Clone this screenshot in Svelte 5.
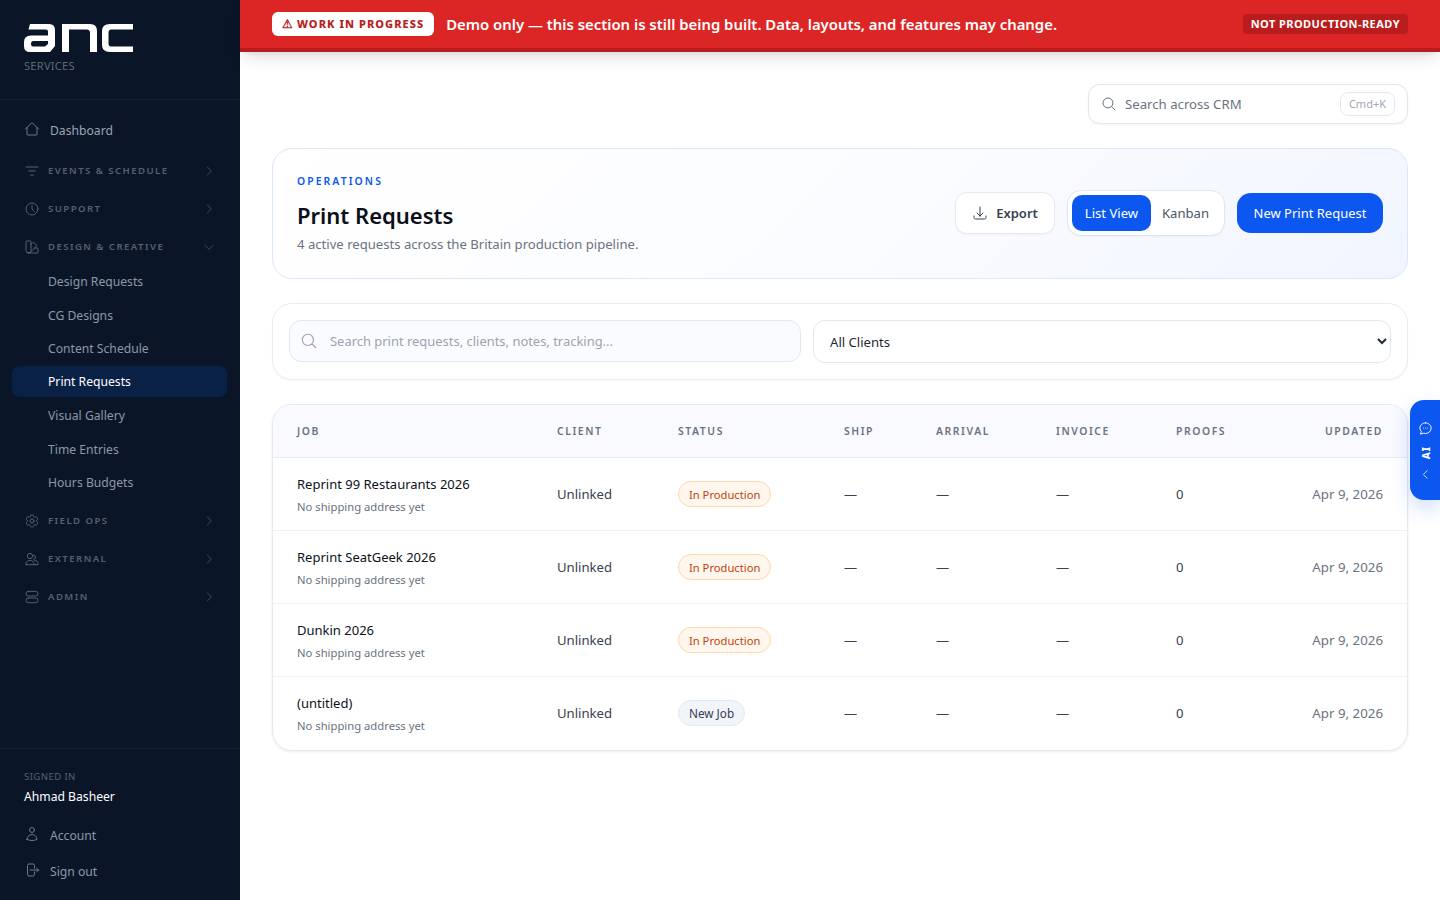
<script>
  const icons = {
    home: 'M2.25 12l8.954-8.955c.44-.439 1.152-.439 1.591 0L21.75 12M4.5 9.75v10.125c0 .621.504 1.125 1.125 1.125h12.75c.621 0 1.125-.504 1.125-1.125V9.75',
    filter: 'M3 6h18M7 12h10M10 18h4',
    clock: 'M12 7v5l3.5 3.5M21 12a9 9 0 11-18 0 9 9 0 0118 0z',
    swatch: 'M4.098 19.902a3.75 3.75 0 005.304 0l6.401-6.402M6.75 21A3.75 3.75 0 013 17.25V4.125C3 3.504 3.504 3 4.125 3h5.25c.621 0 1.125.504 1.125 1.125v4.072M6.75 21a3.75 3.75 0 003.75-3.75V8.197M6.75 21h13.125c.621 0 1.125-.504 1.125-1.125v-5.25c0-.621-.504-1.125-1.125-1.125h-4.072M10.5 8.197l2.88-2.88c.438-.439 1.15-.439 1.59 0l3.712 3.713c.44.44.44 1.152 0 1.59l-2.879 2.88',
    cog: 'M9.594 3.94c.09-.542.56-.94 1.11-.94h2.593c.55 0 1.02.398 1.11.94l.213 1.281c.063.374.313.686.645.87.074.04.147.083.22.127.324.196.72.257 1.075.124l1.217-.456a1.125 1.125 0 011.37.49l1.296 2.247a1.125 1.125 0 01-.26 1.431l-1.003.827c-.293.24-.438.613-.431.992a6.759 6.759 0 010 .255c-.007.378.138.75.43.99l1.005.828c.424.35.534.954.26 1.43l-1.298 2.247a1.125 1.125 0 01-1.369.491l-1.217-.456c-.355-.133-.75-.072-1.076.124a6.57 6.57 0 01-.22.128c-.331.183-.581.495-.644.869l-.213 1.28c-.09.543-.56.941-1.11.941h-2.594c-.55 0-1.02-.398-1.11-.94l-.213-1.281c-.062-.374-.312-.686-.644-.87a6.52 6.52 0 01-.22-.127c-.325-.196-.72-.257-1.076-.124l-1.217.456a1.125 1.125 0 01-1.369-.49l-1.297-2.247a1.125 1.125 0 01.26-1.431l1.004-.827c.292-.24.437-.613.43-.992a6.932 6.932 0 010-.255c.007-.378-.138-.75-.43-.99l-1.004-.828a1.125 1.125 0 01-.26-1.43l1.297-2.247a1.125 1.125 0 011.37-.491l1.216.456c.356.133.751.072 1.076-.124.072-.044.146-.087.22-.128.332-.183.582-.495.644-.869l.214-1.281zM15 12a3 3 0 11-6 0 3 3 0 016 0z',
    users: 'M13 7.5a4 4 0 11-8 0 4 4 0 018 0zM3 20.5v-1.2C3 16.4 5.6 14 9 14s6 2.400 6 5.300v1.200H3zM14.500 6.500a3 3 0 110 6M15.500 14c3.200.2 5.500 2 5.500 4.500v2h-6',
    admin: 'M6.500 3.500h11a3.500 3.500 0 010 7h-11a3.500 3.500 0 010-7zM6.500 13.500h11a3.500 3.500 0 010 7h-11a3.500 3.500 0 010-7z',
    user: 'M15.75 6a3.75 3.75 0 11-7.5 0 3.75 3.75 0 017.5 0zM4.501 20.118a7.5 7.5 0 0114.998 0A17.933 17.933 0 0112 21.75c-2.676 0-5.216-.584-7.499-1.632z',
    signout: 'M15.75 9V5.25A2.25 2.25 0 0013.5 3h-6a2.25 2.25 0 00-2.25 2.25v13.5A2.25 2.25 0 007.500 21h6a2.250 2.250 0 002.250-2.250V15m3 0l3-3m0 0l-3-3m3 3H9',
    download: 'M3 16.5v2.25A2.25 2.25 0 005.25 21h13.5A2.25 2.25 0 0021 18.75V16.5M16.5 12L12 16.5m0 0L7.5 12m4.5 4.5V3',
    search: 'M21 21l-5.197-5.197m0 0A7.5 7.5 0 105.196 5.196a7.5 7.5 0 0010.607 10.607z',
    chat: 'M12 3c5 0 9 3.800 9 8.500S17 20 12 20c-1.100 0-2.100-.2-3-.5L4 21l1.300-4.200C3.900 15.300 3 13.500 3 11.500 3 6.800 7 3 12 3zM8.500 11.500h.01M12 11.500h.01M15.500 11.500h.01',
    right: 'M9 5l7 7-7 7',
    down: 'M5 9l7 7 7-7',
    left: 'M15 5l-7 7 7 7'
  };
  const subItems = ['Design Requests', 'CG Designs', 'Content Schedule', 'Print Requests', 'Visual Gallery', 'Time Entries', 'Hours Budgets'];
  const rows = [
    { job: 'Reprint 99 Restaurants 2026', status: 'In Production', kind: 'prod' },
    { job: 'Reprint SeatGeek 2026', status: 'In Production', kind: 'prod' },
    { job: 'Dunkin 2026', status: 'In Production', kind: 'prod' },
    { job: '(untitled)', status: 'New Job', kind: 'new' }
  ];
</script>

{#snippet icon(name, cls)}
  <svg class={cls} viewBox="0 0 24 24" fill="none" stroke="currentColor" stroke-width="1.5" stroke-linecap="round" stroke-linejoin="round" aria-hidden="true"><path d={icons[name]} /></svg>
{/snippet}

{#snippet group(name, label, open)}
  <div class="group">
    {@render icon(name, 'g-icon')}
    <span class="g-label">{label}</span>
    {@render icon(open ? 'down' : 'right', 'g-chev')}
  </div>
{/snippet}

<div class="app">
  <aside class="sidebar">
    <div class="brand">
      <svg class="logo" viewBox="24 24 110 28" aria-label="ANC" role="img">
        <path fill="#fff" fill-rule="evenodd" d="M30 24H49Q55 24 55 30V46L50 52H30Q24 52 24 46V42Q24 35.500 31 35.500H48V31.500Q48 29.500 46 29.500H28.500ZM33 41Q31 41 31 43.500Q31 46.500 33 46.500H45L48 44V41Z" />
        <path fill="#fff" d="M62 24H90Q97 24 97 31V52H90V33Q90 29.500 87 29.500H69V52H62Z" />
        <path fill="#fff" d="M110 24H133V29.500H111Q108.500 29.500 108.500 33V43Q108.500 46.500 111 46.500H133V52H110Q102 52 102 45V31Q102 24 110 24Z" />
      </svg>
      <div class="brand-sub">SERVICES</div>
    </div>
    <nav class="nav">
      <a class="top-link" href="#dashboard">{@render icon('home', 'l-icon')}<span>Dashboard</span></a>
      {@render group('filter', 'EVENTS & SCHEDULE', false)}
      {@render group('clock', 'SUPPORT', false)}
      {@render group('swatch', 'DESIGN & CREATIVE', true)}
      <div class="subs">
        {#each subItems as item}
          <a class="sub" class:active={item === 'Print Requests'} href="#sub">{item}</a>
        {/each}
      </div>
      {@render group('cog', 'FIELD OPS', false)}
      {@render group('users', 'EXTERNAL', false)}
      {@render group('admin', 'ADMIN', false)}
    </nav>
    <div class="foot">
      <div class="signed">SIGNED IN</div>
      <div class="who">Ahmad Basheer</div>
      <a class="foot-link first" href="#account">{@render icon('user', 'l-icon')}<span>Account</span></a>
      <a class="foot-link" href="#signout">{@render icon('signout', 'l-icon')}<span>Sign out</span></a>
    </div>
  </aside>

  <div class="main">
    <div class="banner">
      <span class="wip"><span class="warn">⚠</span> WORK IN PROGRESS</span>
      <span class="demo">Demo only — this section is still being built. Data, layouts, and features may change.</span>
      <span class="npr">NOT PRODUCTION-READY</span>
    </div>

    <div class="content">
      <div class="topbar">
        <div class="global-search">
          {@render icon('search', 's-icon')}
          <span class="gs-text">Search across CRM</span>
          <span class="kbd">Cmd+K</span>
        </div>
      </div>

      <section class="hero">
        <div class="hero-text">
          <div class="eyebrow">OPERATIONS</div>
          <h1>Print Requests</h1>
          <p>4 active requests across the Britain production pipeline.</p>
        </div>
        <div class="actions">
          <button class="export">{@render icon('download', 'd-icon')}Export</button>
          <div class="toggle">
            <button class="tg on">List View</button>
            <button class="tg">Kanban</button>
          </div>
          <button class="primary">New Print Request</button>
        </div>
      </section>

      <section class="filters">
        <label class="f-search">
          {@render icon('search', 'f-icon')}
          <input placeholder="Search print requests, clients, notes, tracking..." />
        </label>
        <select class="f-select"><option>All Clients</option></select>
      </section>

      <section class="table-card">
        <table>
          <colgroup>
            <col class="c1" /><col class="c2" /><col class="c3" /><col class="c4" /><col class="c5" /><col class="c6" /><col class="c7" /><col />
          </colgroup>
          <thead>
            <tr>
              <th>JOB</th><th>CLIENT</th><th>STATUS</th><th>SHIP</th><th>ARRIVAL</th><th>INVOICE</th><th>PROOFS</th><th class="r">UPDATED</th>
            </tr>
          </thead>
          <tbody>
            {#each rows as row}
              <tr>
                <td class="job-cell">
                  <div class="job">{row.job}</div>
                  <div class="addr">No shipping address yet</div>
                </td>
                <td class="cell">Unlinked</td>
                <td><span class="pill {row.kind}">{row.status}</span></td>
                <td class="cell">—</td>
                <td class="cell">—</td>
                <td class="cell">—</td>
                <td class="cell">0</td>
                <td class="date r">Apr 9, 2026</td>
              </tr>
            {/each}
          </tbody>
        </table>
      </section>
    </div>
  </div>

  <div class="ai">
    {@render icon('chat', 'ai-chat')}
    <span class="ai-label">AI</span>
    {@render icon('left', 'ai-chev')}
  </div>
</div>

<style>
  :global(body) {
    margin: 0;
    background: #fff;
    font-family: "Noto Sans", sans-serif;
    color: #0f172a;
  }
  .app { display: flex; min-height: 900px; height: 900px; overflow: hidden; position: relative; }
  a { text-decoration: none; color: inherit; }

  .sidebar { width: 240px; flex: none; background: #0a1628; display: flex; flex-direction: column; height: 900px; }
  .brand { height: 100px; box-sizing: border-box; padding: 24px 24px 0; border-bottom: 1px solid #152033; }
  .logo { display: block; width: 110px; height: 28px; }
  .brand-sub { margin-top: 7px; font-size: 11px; line-height: 14px; letter-spacing: 0.3px; color: #5d6878; }
  .nav { flex: 1; padding: 13px 13px 0 12px; }
  .top-link { display: flex; align-items: center; gap: 10px; height: 34px; margin-bottom: 5px; padding: 0 12px; color: #9aa5b5; font-size: 12.160px; }
  .l-icon { width: 16px; height: 16px; color: #6e7887; flex: none; margin-top: -2px; }
  .group { display: flex; align-items: center; height: 38px; padding: 0 11px 0 12px; color: #566170; }
  .g-icon { width: 16px; height: 16px; flex: none; margin-right: 8px; }
  .g-label { flex: 1; font-size: 9.600px; line-height: 12px; margin-top: -1px; font-weight: 600; letter-spacing: 1.440px; }
  .g-chev { width: 14px; height: 14px; flex: none; stroke-width: 1.2; }
  .subs { display: flex; flex-direction: column; margin: 0 0 1.500px; }
  .sub { display: block; height: 31px; line-height: 31px; margin-bottom: 2.500px; padding-left: 36px; font-size: 12.160px; color: #8d98a8; border-radius: 8px; }
  .sub.active { color: #fff; background: #0a2146; margin-top: -0.500px; margin-bottom: 3px; line-height: 32px; }
  .foot { height: 152px; box-sizing: border-box; border-top: 1px solid #152033; padding: 21px 24px 0; }
  .signed { font-size: 9.600px; line-height: 14px; color: #566170; letter-spacing: 0.4px; }
  .who { margin-top: 4px; font-size: 12.160px; line-height: 18px; color: #fff; }
  .foot-link { display: flex; align-items: center; gap: 10px; height: 36px; color: #8d98a8; font-size: 12.160px; }
  .foot-link.first { margin-top: 11px; }

  .main { flex: 1; min-width: 0; }
  .banner {
    height: 52px; box-sizing: border-box; background: #dc2626; border-bottom: 4px solid #b91c1c;
    box-shadow: 0 10px 15px -3px rgba(0,0,0,.1), 0 4px 6px -4px rgba(0,0,0,.1);
    display: flex; align-items: center; padding: 0 32px; color: #fff; position: relative;
  }
  .wip { background: #fff; color: #b91c1c; border-radius: 6px; height: 24px; line-height: 24px; padding: 0 10px; font-size: 11px; font-weight: 800; letter-spacing: 1.050px; white-space: nowrap; }
  .warn { font-size: 12px; letter-spacing: 0; }
  .demo { margin-left: 12px; font-size: 14.880px; font-weight: 600; flex: 1; white-space: nowrap; }
  .npr { background: #b91c1c; border-radius: 4px; height: 20px; line-height: 20px; padding: 0 8px; font-size: 11px; font-weight: 700; letter-spacing: .45px; white-space: nowrap; }

  .content { padding: 32px 32px 0; display: flex; flex-direction: column; gap: 24px; }
  .topbar { display: flex; justify-content: flex-end; }
  .global-search {
    width: 320px; height: 40px; box-sizing: border-box; border: 1px solid #e2e8f0; border-radius: 12px;
    box-shadow: 0 1px 2px rgba(15,23,42,.05); display: flex; align-items: center; padding: 0 12px; gap: 8px; background: #fff;
  }
  .s-icon { width: 16px; height: 16px; color: #64748b; flex: none; }
  .gs-text { flex: 1; font-size: 13.200px; color: #6b7280; }
  .kbd { border: 1px solid #e2e8f0; border-radius: 8px; height: 24px; line-height: 22px; box-sizing: border-box; padding: 0 8px; font-size: 11px; color: #a0a8b4; }

  .hero {
    height: 131px; box-sizing: border-box; border: 1px solid #dbe6fb; border-radius: 20px;
    background: linear-gradient(135deg, #ffffff 0%, #fbfcff 50%, #f1f5ff 100%);
    display: flex; justify-content: space-between; align-items: center; padding: 0 24px;
  }
  .eyebrow { font-size: 10.400px; line-height: 14px; font-weight: 600; letter-spacing: 2.080px; color: #0b57f0; }
  h1 { margin: 12px 0 0; font-size: 22px; line-height: 30px; font-weight: 600; color: #0a0f1a; }
  .hero p { margin: 4px 0 0; font-size: 13.120px; line-height: 20px; color: #6b7280; }
  .actions { display: flex; align-items: center; gap: 12px; margin-top: -2px; }
  button { font-family: inherit; cursor: pointer; }
  .export {
    height: 42px; box-sizing: border-box; width: 100px; border: 1px solid #e5e9f2; background: #fff; border-radius: 12px;
    display: flex; align-items: center; justify-content: center; gap: 8px; font-size: 13px; font-weight: 600; color: #374151;
    box-shadow: 0 1px 2px rgba(15,23,42,.04);
  }
  .d-icon { width: 16px; height: 16px; }
  .toggle { height: 46px; width: 158px; box-sizing: border-box; border: 1px solid #dbe6fb; background: #fff; border-radius: 14px; padding: 4px; display: flex; box-shadow: 0 1px 2px rgba(15,23,42,.04); }
  .tg { border: 0; background: transparent; border-radius: 10px; font-size: 13.120px; color: #4b5563; padding: 0; flex: 1; height: 36px; }
  .tg.on { background: #0b57f0; color: #fff; flex: none; width: 79px; }
  .primary { height: 40px; width: 146px; border: 0; border-radius: 14px; background: #0b57f0; color: #fff; font-size: 13px; font-weight: 400; padding: 0; }

  .filters {
    height: 77px; box-sizing: border-box; border: 1px solid #e8ecf5; border-radius: 20px; background: #fff;
    box-shadow: 0 1px 2px rgba(15,23,42,.04);
    display: grid; grid-template-columns: 512px 1fr; gap: 12px; padding: 16px; align-items: start;
  }
  .f-search { height: 42px; box-sizing: border-box; border: 1px solid #e2e8f0; border-radius: 12px; background: #fafbff; display: flex; align-items: center; padding: 0 10px; gap: 12px; }
  .f-icon { width: 18px; height: 18px; color: #94a3b8; flex: none; }
  .f-search input { flex: 1; min-width: 0; border: 0; outline: 0; background: transparent; font: inherit; font-size: 12.950px; color: #0f172a; padding: 0; }
  .f-search input::placeholder { color: #9ca3af; opacity: 1; }
  .f-select { height: 43px; box-sizing: border-box; width: 100%; border: 1px solid #e2e8f0; border-radius: 12px; background: #fff; font: inherit; font-size: 13.120px; color: #1f2937; padding: 0 12px; outline: 0; }

  .table-card { border: 1px solid #e5e9f2; border-radius: 20px; overflow: hidden; background: #fff; box-shadow: 0 1px 3px rgba(15,23,42,.08); padding-bottom: 1px; }
  table { width: 100%; border-collapse: collapse; table-layout: fixed; }
  .c1 { width: 260px; } .c2 { width: 121px; } .c3 { width: 166px; } .c4 { width: 92px; } .c5 { width: 120px; } .c6 { width: 120px; } .c7 { width: 120px; }
  thead tr { background: #f8faff; height: 52px; }
  th { padding: 0 0 0 24px; text-align: left; font-size: 10.400px; font-weight: 600; letter-spacing: 1.560px; color: #6b7280; border-bottom: 1px solid #e8ecf5; }
  th.r, td.r { text-align: right; padding-right: 24px; padding-left: 0; }
  tbody tr { height: 73px; }
  tbody tr:not(:last-child) td { border-bottom: 1px solid #eef1f7; }
  td { padding: 0 0 0 24px; font-size: 13.120px; }
  td.job-cell { padding-top: 2px; }
  .job { font-size: 13px; line-height: 20px; color: #0b1220; }
  .addr { margin-top: 5px; font-size: 11.250px; line-height: 16px; color: #6b7280; }
  .cell { color: #374151; }
  .date { color: #6b7280; font-size: 13.300px; }
  .pill { display: inline-block; height: 26px; line-height: 25px; box-sizing: border-box; padding: 0 10px; border-radius: 13px; font-size: 11.200px; vertical-align: middle; }
  .pill.prod { background: #fff7ed; border: 1px solid #fed7aa; color: #c2410c; }
  .pill.new { background: #f1f5f9; border: 1px solid #e2e8f0; color: #334155; font-size: 11.750px; }

  .ai {
    position: absolute; right: 0; top: 400px; width: 30px; height: 100px; box-sizing: border-box;
    background: #0b57f0; border-radius: 14px 0 0 14px; color: #fff; display: flex; flex-direction: column; align-items: center; padding: 21px 0 0 1px;
    box-shadow: 0 8px 20px rgba(11,87,240,.2);
  }
  .ai-chat { width: 15px; height: 15px; }
  .ai-label { writing-mode: vertical-rl; transform: rotate(180deg); font-size: 10px; font-weight: 800; letter-spacing: 1px; line-height: 12px; margin-top: 10px; }
  .ai-chev { width: 13px; height: 13px; margin-top: 9px; }
</style>
